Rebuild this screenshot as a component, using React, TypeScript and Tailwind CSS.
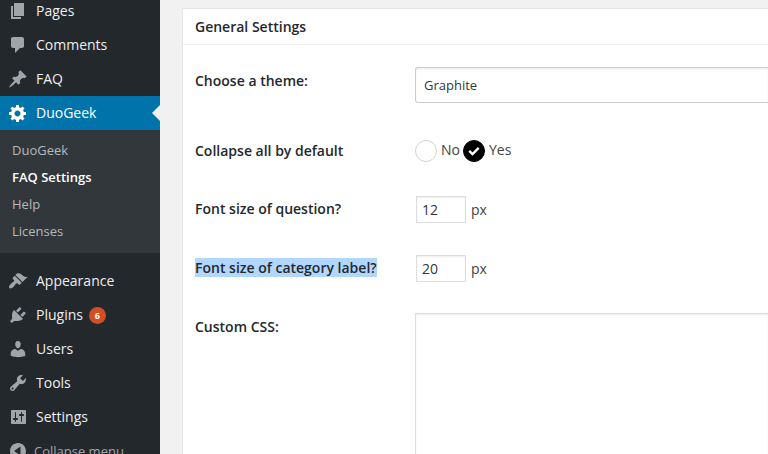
import { useState } from 'react';
import type { ReactNode } from 'react';

const icons = {
  pages: 'M6 15V2h10v13H6zm-1 1h8v2H3V5h2v11z',
  comments: 'M5 2h9c1.1 0 2 .9 2 2v7c0 1.1-.9 2-2 2h-2l-5 5v-5H5c-1.1 0-2-.9-2-2V4c0-1.1.9-2 2-2z',
  pin: 'M10.44 3.02l1.82-1.82 6.36 6.35-1.83 1.82c-1.05-.68-2.48-.57-3.41.36l-.75.75c-.92.93-1.04 2.35-.35 3.41l-1.83 1.82-2.41-2.41-2.8 2.79c-.42.42-3.38 2.71-3.8 2.29s1.86-3.39 2.28-3.81l2.79-2.79L4.1 9.36l1.83-1.82c1.05.69 2.48.57 3.4-.36l.75-.75c.93-.92 1.05-2.35.36-3.41z',
  gear: 'M18 12h-2.18c-.17.7-.44 1.35-.81 1.93l1.54 1.54-2.1 2.1-1.54-1.54c-.58.36-1.23.63-1.91.79V19H8v-2.18c-.68-.16-1.33-.43-1.91-.79l-1.54 1.54-2.12-2.12 1.54-1.54c-.36-.58-.63-1.23-.79-1.91H1V9.03h2.17c.16-.7.44-1.35.8-1.94L2.43 5.55l2.1-2.1 1.54 1.54c.58-.37 1.24-.64 1.93-.81V2h3v2.18c.68.16 1.33.43 1.91.79l1.54-1.54 2.12 2.12-1.54 1.54c.36.59.64 1.24.8 1.94H18V12zm-8.5 1.5c1.66 0 3-1.34 3-3s-1.34-3-3-3-3 1.34-3 3 1.34 3 3 3z',
  brush: 'M14.48 11.06L7.41 3.99l1.5-1.5c.5-.56 2.3-.47 3.51.32 1.21.8 1.43 1.28 2.91 2.1 1.18.64 2.45 1.26 4.45.85zm-.71.71L6.7 4.7 4.93 6.47c-.39.39-.39 1.02 0 1.41l1.06 1.06c.39.39.39 1.03 0 1.42-.6.6-1.43 1.11-2.21 1.69-.35.26-.7.53-1.01.84C1.43 14.23.4 16.08 1.4 17.07c.99 1 2.84-.03 4.18-1.36.31-.31.58-.66.85-1.02.57-.78 1.08-1.61 1.69-2.21.39-.39 1.02-.39 1.41 0l1.06 1.06c.39.39 1.02.39 1.41 0z',
  plug: 'M13.11 4.36L9.87 7.6 8 5.73l3.24-3.24c.35-.34 1.05-.2 1.56.32.52.51.66 1.21.31 1.55zm-8 1.77l.91-1.12 9.01 9.01-1.19.84c-.71.71-2.63 1.16-3.82 1.16H6.14L4.9 17.26c-.59.59-1.54.59-2.12 0-.59-.58-.59-1.53 0-2.12l1.24-1.24v-3.88c0-1.13.4-3.19 1.09-3.89zm7.26 3.97l3.24-3.24c.34-.35 1.04-.21 1.55.31.52.51.66 1.21.31 1.55l-3.24 3.25z',
  user: 'M10 9.25c-2.27 0-2.73-3.44-2.73-3.44C7 4.02 7.82 2 9.97 2c2.16 0 2.98 2.02 2.71 3.81 0 0-.41 3.44-2.68 3.44zm0 2.57L12.72 10c2.39 0 4.52 2.33 4.52 4.53v2.49s-3.65 1.13-7.24 1.13c-3.65 0-7.24-1.13-7.24-1.13v-2.49c0-2.25 1.94-4.48 4.47-4.48z',
  wrench: 'M16.68 9.77c-1.34 1.34-3.3 1.67-4.95.99l-5.41 6.52c-.99.99-2.59.99-3.58 0s-.99-2.59 0-3.57l6.52-5.42c-.68-1.65-.35-3.61.99-4.95 1.28-1.28 3.12-1.62 4.72-1.06l-2.89 2.89 2.82 2.82 2.86-2.87c.53 1.58.18 3.39-1.08 4.65zM3.81 16.21c.4.39 1.04.39 1.43 0 .4-.4.4-1.04 0-1.43-.39-.4-1.03-.4-1.43 0-.39.39-.39 1.03 0 1.43z',
  sliders: 'M18 16V4c0-.55-.45-1-1-1H4c-.55 0-1 .45-1 1v12c0 .55.45 1 1 1h13c.55 0 1-.45 1-1zM8 11h1c.55 0 1 .45 1 1s-.45 1-1 1H8v1.5c0 .28-.22.5-.5.5s-.5-.22-.5-.5V13H6c-.55 0-1-.45-1-1s.45-1 1-1h1V5.5c0-.28.22-.5.5-.5s.5.22.5.5V11zm5-2h-1c-.55 0-1-.45-1-1s.45-1 1-1h1V5.5c0-.28.22-.5.5-.5s.5.22.5.5V7h1c.55 0 1 .45 1 1s-.45 1-1 1h-1v5.5c0 .28-.22.5-.5.5s-.5-.22-.5-.5V9z',
  collapse: 'M10 2c4.42 0 8 3.58 8 8s-3.58 8-8 8-8-3.58-8-8 3.58-8 8-8zm2.5 3.5L6 10l6.5 4.5z',
};

type IconName = keyof typeof icons;

const Icon = ({ name }: { name: IconName }) => (
  <svg viewBox="0 0 20 20" className="size-5 shrink-0" fill="currentColor" fillRule="evenodd" aria-hidden="true">
    <path d={icons[name]} />
  </svg>
);

type MenuItemProps = { icon: IconName; label: string; badge?: number };

const MenuItem = ({ icon, label, badge }: MenuItemProps) => (
  <li>
    <a href="#" className="flex h-[34px] items-center gap-2 px-2 text-[#eeeeee]">
      <span className="text-[#a0a5aa]">
        <Icon name={icon} />
      </span>
      <span>{label}</span>
      {badge && (
        <span className="-ml-0.5 size-[17px] rounded-full bg-[#d54e21] text-center text-[9px] leading-[17px] font-bold text-white">
          {badge}
        </span>
      )}
    </a>
  </li>
);

const submenu = ['DuoGeek', 'FAQ Settings', 'Help', 'Licenses'];

const Sidebar = () => (
  <nav className="w-40 shrink-0 overflow-hidden bg-[#23282d] text-sm font-medium">
    <ul className="-mt-1.5">
      <MenuItem icon="pages" label="Pages" />
      <MenuItem icon="comments" label="Comments" />
      <MenuItem icon="pin" label="FAQ" />
      <li className="mb-[11px]">
        <a href="#" className="relative flex h-[34px] items-center gap-2 bg-[#0073aa] px-2 text-white">
          <Icon name="gear" />
          DuoGeek
          <span className="absolute top-1/2 right-0 -translate-y-1/2 border-8 border-l-0 border-transparent border-r-[#f1f1f1]" />
        </a>
        <ul className="bg-[#32373c] pt-[7px] pb-2 text-[13px]">
          {submenu.map((label) => (
            <li key={label}>
              <a
                href="#"
                className={
                  label === 'FAQ Settings'
                    ? 'block px-3 leading-[27px] font-semibold text-white'
                    : 'block px-3 leading-[27px] text-[#b4b9be]'
                }
              >
                {label}
              </a>
            </li>
          ))}
        </ul>
      </li>
      <MenuItem icon="brush" label="Appearance" />
      <MenuItem icon="plug" label="Plugins" badge={6} />
      <MenuItem icon="user" label="Users" />
      <MenuItem icon="wrench" label="Tools" />
      <MenuItem icon="sliders" label="Settings" />
      <li>
        <button className="flex h-[34px] items-center gap-1.5 px-2 text-[13px] text-[#a0a5aa]">
          <Icon name="collapse" />
          Collapse menu
        </button>
      </li>
    </ul>
  </nav>
);

const Row = ({ label, htmlFor, children }: { label: ReactNode; htmlFor?: string; children: ReactNode }) => (
  <div className="flex min-h-[58px]">
    <div className="w-[220px] shrink-0 pt-5 leading-[18px] font-semibold text-[#23282d]">
      {htmlFor ? <label htmlFor={htmlFor}>{label}</label> : <span id="collapse-label">{label}</span>}
    </div>
    <div className="min-w-0 flex-1 py-[15px]">{children}</div>
  </div>
);

// 12px / 20px fields with their unit behind them
const SizeField = ({ id, value, onChange }: { id: string; value: string; onChange: (value: string) => void }) => (
  <div className="flex items-center gap-1 leading-5">
    <input
      id={id}
      value={value}
      onChange={(e) => onChange(e.target.value)}
      className="m-px h-[27px] w-[50px] border border-[#dddddd] bg-white px-[5px] text-[#32373c] shadow-[inset_0_1px_2px_rgba(0,0,0,0.07)]"
    />
    px
  </div>
);

const App = () => {
  const [collapsed, setCollapsed] = useState('Yes');
  const [questionSize, setQuestionSize] = useState('12');
  const [labelSize, setLabelSize] = useState('20');

  return (
    <div className="flex h-screen overflow-hidden bg-[#f1f1f1] font-['Open_Sans',sans-serif] text-sm text-[#444444]">
      <Sidebar />
      <main className="min-w-0 flex-1 pt-2 pl-[22px]">
        <section className="min-h-full border-t border-l border-[#e5e5e5] bg-white">
          <h2 className="border-b border-[#eeeeee] px-3 py-2 leading-[19px] font-semibold text-[#23282d]">
            General Settings
          </h2>

          <form className="pt-[7px] pl-3">
            <Row label="Choose a theme:" htmlFor="theme">
              <select
                id="theme"
                className="mb-1 block h-9 w-full appearance-none rounded-l-[3px] border border-r-0 border-[#cccccc] bg-white px-2 text-[13px] text-[#32373c] shadow-[inset_0_1px_2px_rgba(0,0,0,0.07)]"
              >
                <option>Graphite</option>
              </select>
            </Row>

            <Row label="Collapse all by default">
              <div role="radiogroup" aria-labelledby="collapse-label" className="flex gap-[3px] pt-[3px]">
                {['No', 'Yes'].map((option) => (
                  <label key={option} className="relative flex items-start gap-1 leading-5">
                    <input
                      type="radio"
                      name="collapse"
                      value={option}
                      checked={collapsed === option}
                      onChange={() => setCollapsed(option)}
                      className="size-[22px] appearance-none rounded-full border border-[#d3d3cd] bg-white checked:border-black checked:bg-black"
                    />
                    {collapsed === option && (
                      <svg
                        viewBox="0 0 22 22"
                        className="pointer-events-none absolute top-0 left-0 size-[22px]"
                        fill="none"
                        stroke="white"
                        strokeWidth="2.4"
                        aria-hidden="true"
                      >
                        <path d="M6.2 10.8l3.3 3.2 6.2-6.2" />
                      </svg>
                    )}
                    {option}
                  </label>
                ))}
              </div>
            </Row>

            <Row label="Font size of question?" htmlFor="question-size">
              <SizeField id="question-size" value={questionSize} onChange={setQuestionSize} />
            </Row>

            <Row
              label={<span className="bg-[#b2d7fe]">Font size of category label?</span>}
              htmlFor="label-size"
            >
              <SizeField id="label-size" value={labelSize} onChange={setLabelSize} />
            </Row>

            <Row label="Custom CSS:" htmlFor="custom-css">
              <textarea
                id="custom-css"
                rows={8}
                className="block w-full resize-none border border-r-0 border-[#dddddd] bg-white p-1.5 text-[#32373c] shadow-[inset_0_1px_2px_rgba(0,0,0,0.07)]"
              />
            </Row>
          </form>
        </section>
      </main>
    </div>
  );
};

export default App;
